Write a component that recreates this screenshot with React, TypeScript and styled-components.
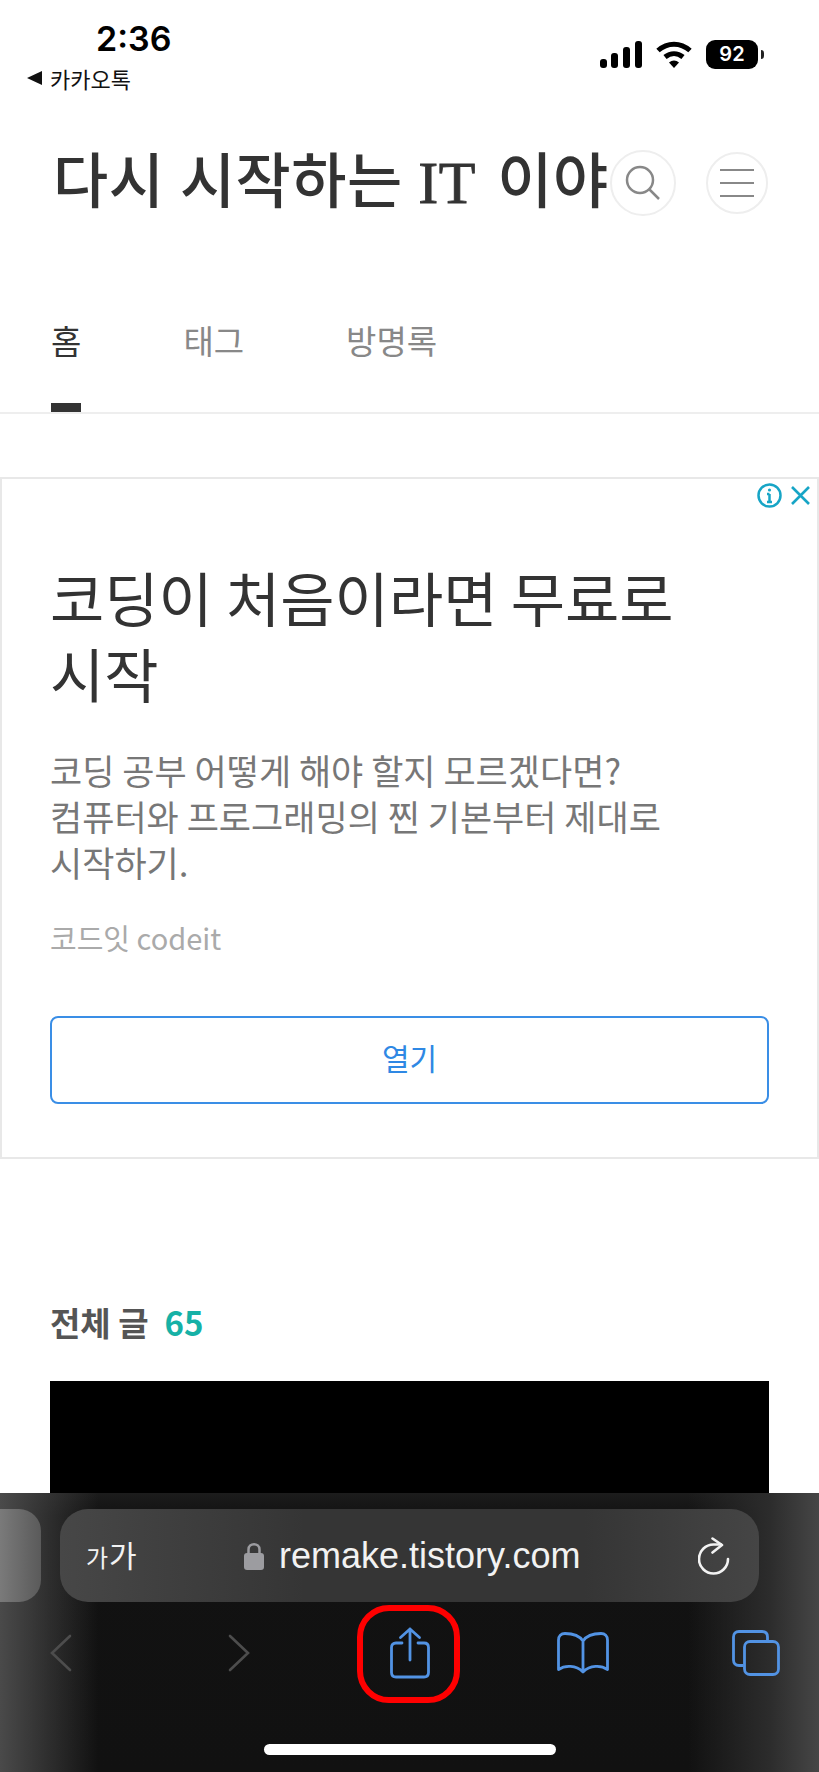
import React from "react"
import styled, { createGlobalStyle } from "styled-components"

const Global = createGlobalStyle`
  html, body {
    margin: 0;
    padding: 0;
    background: #fff;
  }
  * {
    box-sizing: border-box;
  }
`

const Page = styled.div`
  width: 819px;
  height: 1772px;
  display: flex;
  flex-direction: column;
  overflow: hidden;
  background: #fff;
  font-family: "Noto Sans CJK KR", "Liberation Sans", sans-serif;
`

const StatusBar = styled.div`
  height: 150px;
  display: flex;
  justify-content: space-between;
  padding: 18px 61px 0 27px;
`

const StatusLeft = styled.div`
  display: flex;
  flex-direction: column;
`

const Time = styled.div`
  margin-left: 69px;
  font-family: Inter, "Liberation Sans", sans-serif;
  font-size: 34px;
  line-height: 42px;
  font-weight: 600;
  color: #000;
`

const BackLink = styled.div`
  display: flex;
  align-items: center;
  gap: 8px;
  margin-top: 3px;
  font-size: 22px;
  line-height: 30px;
  color: #111;
`

const StatusRight = styled.div`
  display: flex;
  align-items: center;
  height: 30px;
  margin-top: 21px;
  gap: 14px;
`

const Battery = styled.div`
  position: relative;
  width: 52px;
  height: 29px;
  border-radius: 9px;
  background: #000;
  color: #fff;
  display: flex;
  align-items: center;
  justify-content: center;
  font-family: Inter, "Liberation Sans", sans-serif;
  font-size: 20px;
  font-weight: 600;
  &::after {
    content: "";
    position: absolute;
    right: -6px;
    top: 10px;
    width: 3px;
    height: 9px;
    border-radius: 0 3px 3px 0;
    background: #222;
  }
`

const Header = styled.header`
  height: 66px;
  display: flex;
  align-items: center;
  padding: 0 51px 0 53px;
`

const BlogTitle = styled.h1`
  flex: 1;
  min-width: 0;
  margin: 0;
  overflow: hidden;
  white-space: nowrap;
  font-family: "Liberation Serif", "Noto Sans CJK KR", serif;
  font-size: 60px;
  line-height: 66px;
  font-weight: 500;
  letter-spacing: 0.5px;
  color: #333;
`

const TitleLatin = styled.span`
  margin-right: 6px;
  -webkit-text-stroke: 0.8px #333;
`

const RoundButton = styled.div<{ $size: number; $gap?: number }>`
  flex: none;
  width: ${(props) => props.$size}px;
  height: ${(props) => props.$size}px;
  margin-left: ${(props) => props.$gap ?? 0}px;
  border: 2px solid #eeeeee;
  border-radius: 50%;
  background: #fff;
  display: flex;
  align-items: center;
  justify-content: center;
`

const Nav = styled.nav`
  display: flex;
  gap: 102px;
  padding: 104px 0 0 51px;
  border-bottom: 2px solid #eeeeee;
`

const Tab = styled.div<{ $active?: boolean }>`
  font-size: 33px;
  line-height: 40px;
  padding-bottom: 43px;
  border-bottom: 9px solid ${(props) => (props.$active ? "#333" : "transparent")};
  color: ${(props) => (props.$active ? "#333" : "#888")};
`

const Ad = styled.section`
  position: relative;
  margin-top: 63px;
  height: 682px;
  border: 2px solid #e8e8e8;
  padding: 80px 48px 0;
`

const AdMarks = styled.div`
  position: absolute;
  top: 4px;
  right: 6px;
  display: flex;
  align-items: center;
  gap: 8px;
`

const AdTitle = styled.h2`
  margin: 0;
  font-size: 59px;
  line-height: 76px;
  font-weight: 400;
  color: #333;
`

const AdText = styled.p`
  margin: 36px 0 0;
  font-size: 35px;
  line-height: 46px;
  color: #777;
`

const Advertiser = styled.div`
  margin-top: 34px;
  font-size: 29px;
  line-height: 36px;
  color: #aaa;
`

const OpenButton = styled.div`
  margin-top: 61px;
  height: 88px;
  padding-bottom: 6px;
  border: 2px solid #3a8ee6;
  border-radius: 8px;
  display: flex;
  align-items: center;
  justify-content: center;
  font-size: 30px;
  color: #2f88e4;
`

const Posts = styled.section`
  padding: 143px 50px 0;
`

const PostsTitle = styled.h3`
  margin: 0;
  font-size: 33px;
  line-height: 40px;
  font-weight: 700;
  color: #555;
`

const PostCount = styled.span`
  margin-left: 16px;
  color: #16b1a6;
`

const Thumbnail = styled.div`
  margin-top: 39px;
  height: 112px;
  background: #000;
`

const Toolbar = styled.div`
  height: 279px;
  padding-top: 16px;
  background:
    linear-gradient(90deg, #4a4a4a 0, rgba(17, 17, 17, 0) 12%, rgba(17, 17, 17, 0) 84%, #2c2c2c 94%, #464646 100%),
    linear-gradient(180deg, #1c1c1c 0, #121212 8%, #111 100%);
  display: flex;
  flex-direction: column;
`

const UrlRow = styled.div`
  display: flex;
  gap: 19px;
`

const TabStub = styled.div`
  width: 41px;
  height: 93px;
  border-radius: 0 22px 22px 0;
  background: linear-gradient(90deg, #7a7a7a, #5a5a5a);
`

const UrlField = styled.div`
  width: 699px;
  height: 93px;
  border-radius: 28px;
  background: linear-gradient(90deg, #474747, #353535 35%, #353535 75%, #454545);
  display: flex;
  align-items: center;
  padding: 0 29px 0 26px;
  color: #f2f2f2;
`

const TextSize = styled.div`
  width: 158px;
  display: flex;
  align-items: baseline;
  gap: 1px;
  font-size: 30px;
  line-height: 40px;
`

const SmallGlyph = styled.span`
  font-size: 24px;
`

const Address = styled.div`
  flex: 1;
  display: flex;
  align-items: center;
  gap: 15px;
  font-family: "Liberation Sans", sans-serif;
  font-size: 36px;
`

const IconRow = styled.div`
  height: 102px;
  display: grid;
  grid-template-columns: 178px 162px 167px 175px auto;
  align-items: center;
  justify-items: start;
  padding-left: 50px;
`

const ShareCell = styled.div`
  position: relative;
  display: flex;
`

const Highlight = styled.div`
  position: absolute;
  left: -33px;
  top: -22px;
  width: 103px;
  height: 98px;
  border: 6px solid #f00;
  border-radius: 32px;
`

const HomeIndicator = styled.div`
  width: 292px;
  height: 11px;
  margin: 40px 0 0 264px;
  border-radius: 6px;
  background: #fff;
`

const Signal = () => (
  <svg width="42" height="27" viewBox="0 0 42 27">
    <rect x="0" y="18" width="7" height="9" rx="3" fill="#000" />
    <rect x="11" y="12" width="7" height="15" rx="3" fill="#000" />
    <rect x="23" y="6" width="7" height="21" rx="3" fill="#000" />
    <rect x="35" y="0" width="7" height="27" rx="3" fill="#000" />
  </svg>
)

const Wifi = () => (
  <svg width="36" height="27" viewBox="0 0 36 27" fill="none" stroke="#000" strokeWidth="5">
    <path d="M2 9.5C11.5 1 24.5 1 34 9.5" />
    <path d="M9 16C14.5 11.5 21.5 11.5 27 16" />
    <path d="M13 21.5L18 27L23 21.5C20 18.8 16 18.8 13 21.5Z" fill="#000" stroke="none" />
  </svg>
)

const SearchIcon = () => (
  <svg width="36" height="36" viewBox="0 0 36 36" fill="none" stroke="#888" strokeWidth="2.5">
    <circle cx="15" cy="15" r="13" />
    <path d="M24.5 24.5L34 34" />
  </svg>
)

const MenuIcon = () => (
  <svg width="34" height="28" viewBox="0 0 34 28" fill="none" stroke="#888" strokeWidth="2">
    <path d="M0 1H34M0 14H34M0 27H34" />
  </svg>
)

const InfoIcon = () => (
  <svg width="25" height="25" viewBox="0 0 25 25" fill="none" stroke="#17a5c6" strokeWidth="2.5">
    <circle cx="12.5" cy="12.5" r="11" />
    <path d="M12.5 11V19M10 11H12.5M10 19H15" />
    <circle cx="12.5" cy="7" r="1.6" fill="#17a5c6" stroke="none" />
  </svg>
)

const CloseIcon = () => (
  <svg width="21" height="21" viewBox="0 0 21 21" fill="none" stroke="#17a5c6" strokeWidth="2.6">
    <path d="M2 2L19 19M19 2L2 19" />
  </svg>
)

const LockIcon = () => (
  <svg width="20" height="28" viewBox="0 0 20 28" fill="none">
    <path d="M4.5 12V7.5C4.5 0.5 15.5 0.5 15.5 7.5V12" stroke="#9c9ca0" strokeWidth="2.5" />
    <rect x="0" y="11" width="20" height="17" rx="3" fill="#9c9ca0" />
  </svg>
)

const ReloadIcon = () => (
  <svg width="32" height="38" viewBox="0 0 32 38" fill="none" stroke="#f2f2f2" strokeWidth="2.6" strokeLinecap="round" strokeLinejoin="round">
    <path d="M30 22A14.5 14.5 0 1 1 15.5 7.5H23" />
    <path d="M14.5 1.5L24 8L14.5 15.5" />
  </svg>
)

const Chevron = ({ flip }: { flip?: boolean }) => (
  <svg width="22" height="38" viewBox="0 0 22 38" fill="none" stroke="#4d4d4d" strokeWidth="2.6" strokeLinecap="round">
    <path d={flip ? "M2 2L20 19L2 36" : "M20 2L2 19L20 36"} />
  </svg>
)

const ShareIcon = () => (
  <svg width="40" height="52" viewBox="0 0 40 52" fill="none" stroke="#5293e4" strokeWidth="2.8" strokeLinecap="round" strokeLinejoin="round">
    <path d="M12 16H6C3 16 1.5 18 1.5 20.5V45.5C1.5 48.5 3 50 6 50H34C37 50 38.5 48.5 38.5 45.5V20.5C38.5 18 37 16 34 16H28" />
    <path d="M20 33V2M10.5 10.5L20 2L29.5 10.5" />
  </svg>
)

const BookIcon = () => (
  <svg width="52" height="42" viewBox="0 0 52 42" fill="none" stroke="#5293e4" strokeWidth="2.8" strokeLinecap="round" strokeLinejoin="round">
    <path d="M26 9C22 3 15 1.5 8 1.5C4 1.5 1.5 4 1.5 8V37.5C8 33 19 33 26 40C33 33 44 33 50.5 37.5V8C50.5 4 48 1.5 44 1.5C37 1.5 30 3 26 9V38" />
  </svg>
)

const TabsIcon = () => (
  <svg width="48" height="46" viewBox="0 0 48 46" fill="none" stroke="#5293e4" strokeWidth="2.8" strokeLinejoin="round">
    <path d="M11.5 35.5H7C3.5 35.5 1.5 33.5 1.5 30V7C1.5 3.5 3.5 1.5 7 1.5H30C33.5 1.5 35.5 3.5 35.5 7V11.5" />
    <rect x="12.5" y="11.5" width="34" height="33" rx="5.5" />
  </svg>
)

const App: React.FC = () => {
  return (
    <Page>
      <Global />
      <StatusBar>
        <StatusLeft>
          <Time>2:36</Time>
          <BackLink>
            <svg width="15" height="14" viewBox="0 0 15 14">
              <path d="M15 0V14L0 7Z" fill="#111" />
            </svg>
            카카오톡
          </BackLink>
        </StatusLeft>
        <StatusRight>
          <Signal />
          <Wifi />
          <Battery>92</Battery>
        </StatusRight>
      </StatusBar>
      <Header>
        <BlogTitle>
          다시 시작하는 <TitleLatin>IT</TitleLatin> 이야기
        </BlogTitle>
        <RoundButton $size={66}>
          <SearchIcon />
        </RoundButton>
        <RoundButton $size={62} $gap={30}>
          <MenuIcon />
        </RoundButton>
      </Header>
      <Nav>
        <Tab $active>홈</Tab>
        <Tab>태그</Tab>
        <Tab>방명록</Tab>
      </Nav>
      <Ad>
        <AdMarks>
          <InfoIcon />
          <CloseIcon />
        </AdMarks>
        <AdTitle>
          코딩이 처음이라면 무료로
          <br />
          시작
        </AdTitle>
        <AdText>
          코딩 공부 어떻게 해야 할지 모르겠다면?
          <br />
          컴퓨터와 프로그래밍의 찐 기본부터 제대로
          <br />
          시작하기.
        </AdText>
        <Advertiser>코드잇 codeit</Advertiser>
        <OpenButton>열기</OpenButton>
      </Ad>
      <Posts>
        <PostsTitle>
          전체 글<PostCount>65</PostCount>
        </PostsTitle>
        <Thumbnail />
      </Posts>
      <Toolbar>
        <UrlRow>
          <TabStub />
          <UrlField>
            <TextSize>
              <SmallGlyph>가</SmallGlyph>가
            </TextSize>
            <Address>
              <LockIcon />
              remake.tistory.com
            </Address>
            <ReloadIcon />
          </UrlField>
        </UrlRow>
        <IconRow>
          <Chevron />
          <Chevron flip />
          <ShareCell>
            <ShareIcon />
            <Highlight />
          </ShareCell>
          <BookIcon />
          <TabsIcon />
        </IconRow>
        <HomeIndicator />
      </Toolbar>
    </Page>
  )
}

export default App
